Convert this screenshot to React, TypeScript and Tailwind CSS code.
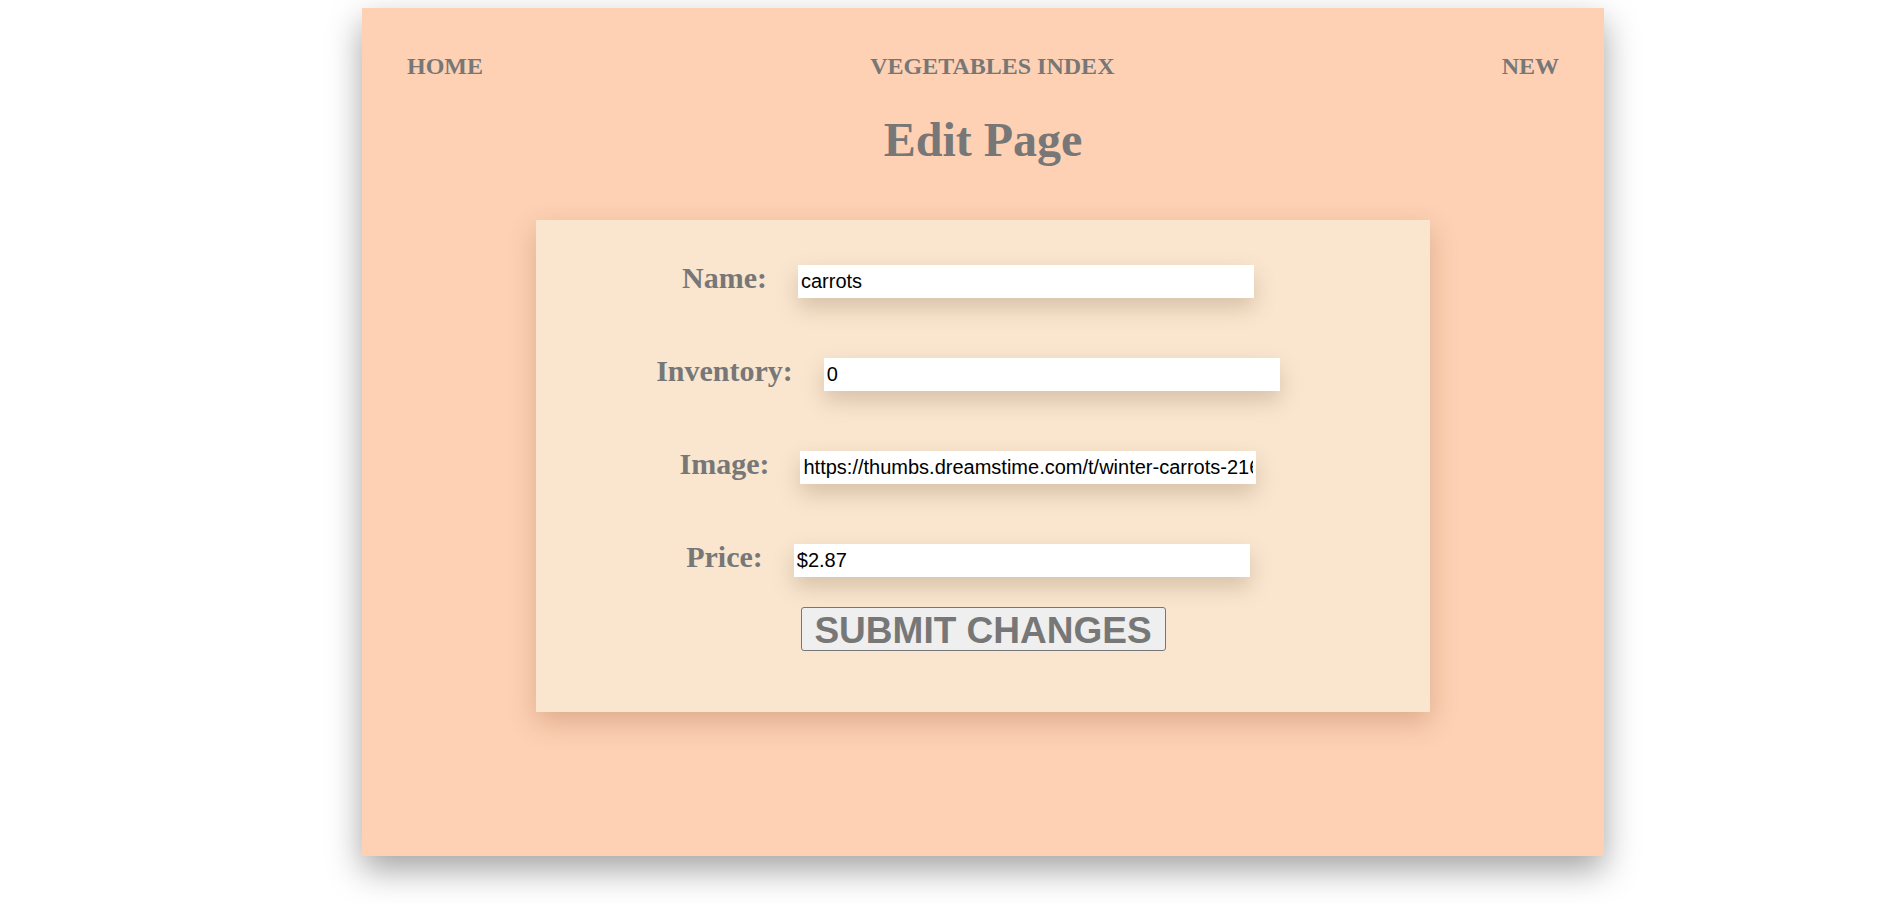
import * as React from "react";

const fields = [
  { id: "name", label: "Name:", value: "carrots" },
  { id: "inventory", label: "Inventory:", value: "0" },
  {
    id: "image",
    label: "Image:",
    value: "https://thumbs.dreamstime.com/t/winter-carrots-21629850.jpg",
  },
  { id: "price", label: "Price:", value: "$2.87" },
];

const serif = "font-['Liberation_Serif','Times_New_Roman',serif]";
const sans = "font-['Liberation_Sans',Arial,sans-serif]";

function NavBar() {
  return (
    <nav
      className={`flex justify-between px-[45px] pt-[44px] text-[24px] font-bold leading-[28px] text-[#777] ${serif}`}
    >
      <a href="#">HOME</a>
      <a href="#">VEGETABLES INDEX</a>
      <a href="#">NEW</a>
    </nav>
  );
}

function FieldRow({ id, label, value }: { id: string; label: string; value: string }) {
  const [text, setText] = React.useState(value);
  return (
    <div className="flex items-start justify-center gap-[31px] pr-[30px]">
      <label
        htmlFor={id}
        className={`-mt-[4px] text-[30px] font-bold leading-[33px] text-[#777] ${serif}`}
      >
        {label}
      </label>
      <input
        id={id}
        value={text}
        onChange={(e) => setText(e.target.value)}
        className={`h-[33px] w-[456px] bg-white px-[3px] text-[20px] text-black shadow-[0_10px_22px_rgba(90,60,30,0.22)] outline-none ${sans}`}
      />
    </div>
  );
}

export default function App() {
  return (
    <div className="min-h-screen bg-white pl-[362px] pt-[8px]">
      <div className="flex h-[848px] w-[1242px] flex-col bg-[#fed1b4] shadow-[0_14px_32px_rgba(0,0,0,0.36)]">
        <NavBar />
        <h1
          className={`mt-[34px] text-center text-[48px] font-bold leading-[52px] text-[#777] ${serif}`}
        >
          Edit Page
        </h1>
        <form
          onSubmit={(e) => e.preventDefault()}
          className="mx-auto mt-[54px] flex h-[492px] w-[894px] flex-col bg-[#fae6cf] pt-[45px] shadow-[0_10px_25px_rgba(120,60,20,0.25)]"
        >
          <div className="flex flex-col gap-[60px]">
            {fields.map((f) => (
              <FieldRow key={f.id} {...f} />
            ))}
          </div>
          <button
            type="submit"
            className={`mx-auto mt-[30px] h-[44px] w-[365px] rounded-[3px] border border-[#767676] bg-[#efefef] pt-[3px] text-[37px] font-bold leading-none text-[#777] ${sans}`}
          >
            SUBMIT CHANGES
          </button>
        </form>
      </div>
    </div>
  );
}
